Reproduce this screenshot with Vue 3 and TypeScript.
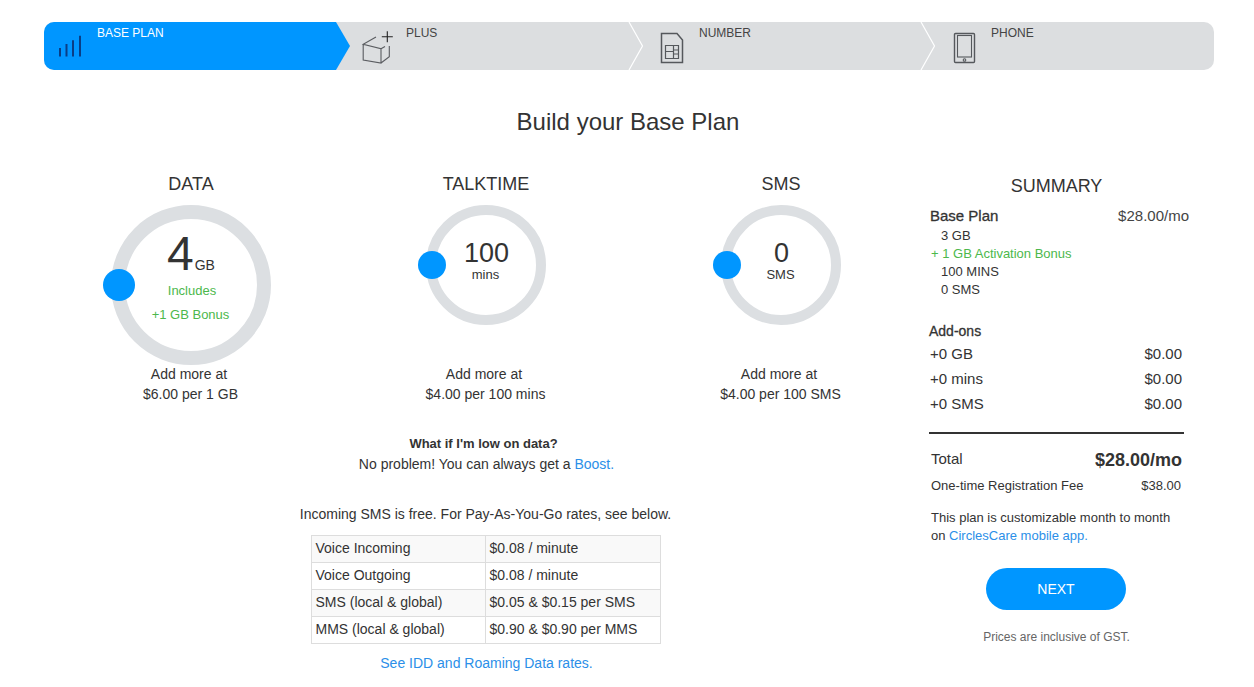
<template>
  <div class="page">
    <div class="stepper">
      <div v-for="(step, i) in steps" :key="step.label" class="step" :class="{ active: i === 0 }">
        <svg v-if="step.icon === 'bars'" class="icon" width="30" height="36" viewBox="0 0 30 36" fill="none" stroke="#0a3d85" stroke-width="2">
          <path d="M4 25.500V17M10.500 25.500V13M17 25.500V9.300M24 25.500V4.700" />
        </svg>
        <svg v-else-if="step.icon === 'box'" class="icon" width="30" height="36" viewBox="0 0 30 36" fill="none" stroke="#5a5c60" stroke-width="1.100">
          <path d="M1.200 13.300V29L19 32V17.700L1.200 13.300L14 6M19 17.700L23 15.500M19 32L27.300 25.700V15" />
          <path d="M25.300 .2v11M19.800 5.700h11" stroke="#222" />
        </svg>
        <svg v-else-if="step.icon === 'sim'" class="icon" width="30" height="36" viewBox="0 0 30 36" fill="none" stroke="#55585c" stroke-width="1.500">
          <path d="M6.500 2.500H22L27.500 9V31.500H6.500Z" />
          <path d="M10.500 14.500H23.500V27.500H10.500ZM18.500 14.500V27.500M10.500 20.500H18.500V27.500M18.500 19H23.500M18.500 23H23.500" stroke-width="1.200" />
        </svg>
        <svg v-else class="icon" width="30" height="36" viewBox="0 0 30 36" fill="none" stroke="#55585c" stroke-width="1.400">
          <rect x="7.500" y="2.500" width="20" height="29" rx="1" />
          <rect x="10.500" y="4.500" width="14" height="21.500" stroke-width="1.100" />
          <circle cx="17.500" cy="29" r="1.300" stroke-width="1.100" />
        </svg>
        <span class="step-label">{{ step.label }}</span>
        <svg v-if="i > 0 && i < 3" class="chevron" width="16" height="48" viewBox="0 0 16 48" fill="none" stroke="#fff" stroke-width="1.200">
          <path d="M1 0l13.500 24L1 48" />
        </svg>
      </div>
    </div>

    <h1 class="title">Build your Base Plan</h1>

    <div class="columns">
      <div class="left">
        <div class="dials">
          <div v-for="dial in dials" :key="dial.name" class="dial">
            <div class="dial-name">{{ dial.name }}</div>
            <div class="dial-box">
              <div class="ring" :class="{ big: dial.big }">
                <span class="knob"></span>
                <div v-if="dial.big" class="big-value">4<small>GB</small></div>
                <div v-else class="value">{{ dial.value }}</div>
                <div v-if="!dial.big" class="unit">{{ dial.unit }}</div>
                <div v-if="dial.big" class="bonus includes">Includes</div>
                <div v-if="dial.big" class="bonus">+1 GB Bonus</div>
              </div>
            </div>
            <p class="price"><span class="add-more">Add more at</span><br />{{ dial.price }}</p>
          </div>
        </div>

        <p class="low"><b>What if I'm low on data?</b>No problem! You can always get a <a>Boost.</a></p>
        <p class="incoming">Incoming SMS is free. For Pay-As-You-Go rates, see below.</p>
        <table class="rates">
          <tbody>
            <tr v-for="rate in rates" :key="rate[0]">
              <td class="name">{{ rate[0] }}</td>
              <td>{{ rate[1] }}</td>
            </tr>
          </tbody>
        </table>
        <a class="idd">See IDD and Roaming Data rates.</a>
      </div>

      <aside class="summary">
        <h2>SUMMARY</h2>
        <div class="plan-head">
          <strong>Base Plan</strong>
          <span>$28.00/mo</span>
        </div>
        <ul class="plan-items">
          <li>3 GB</li>
          <li class="green">+ 1 GB Activation Bonus</li>
          <li>100 MINS</li>
          <li>0 SMS</li>
        </ul>
        <div class="addons-title">Add-ons</div>
        <div v-for="addon in addons" :key="addon" class="addon">
          <span>{{ addon }}</span>
          <span>$0.00</span>
        </div>
        <div class="total">
          <span>Total</span>
          <strong>$28.00/mo</strong>
        </div>
        <div class="fee">
          <span>One-time Registration Fee</span>
          <small>$38.00</small>
        </div>
        <p class="note">This plan is customizable month to month<br />on <a>CirclesCare mobile app.</a></p>
        <button class="next" type="button">NEXT</button>
        <p class="gst">Prices are inclusive of GST.</p>
      </aside>
    </div>
  </div>
</template>

<script setup lang="ts">
const steps = [
  { label: 'BASE PLAN', icon: 'bars' },
  { label: 'PLUS', icon: 'box' },
  { label: 'NUMBER', icon: 'sim' },
  { label: 'PHONE', icon: 'phone' },
]

const dials = [
  { name: 'DATA', value: '4', unit: 'GB', price: '$6.00 per 1 GB', big: true },
  { name: 'TALKTIME', value: '100', unit: 'mins', price: '$4.00 per 100 mins', big: false },
  { name: 'SMS', value: '0', unit: 'SMS', price: '$4.00 per 100 SMS', big: false },
]

const rates = [
  ['Voice Incoming', '$0.08 / minute'],
  ['Voice Outgoing', '$0.08 / minute'],
  ['SMS (local & global)', '$0.05 & $0.15 per SMS'],
  ['MMS (local & global)', '$0.90 & $0.90 per MMS'],
]

const addons = ['+0 GB', '+0 mins', '+0 SMS']
</script>

<style>
html,
body {
  background: #fff;
  overflow: hidden;
}
</style>

<style scoped>
.page {
  width: 1254px;
  height: 687px;
  overflow: hidden;
  padding: 22px 40px 0 44px;
  box-sizing: border-box;
  font-family: 'Liberation Sans', Arial, sans-serif;
  font-size: 14px;
  line-height: 20px;
  color: #333;
}
a {
  color: #2b8fe8;
}
.stepper {
  display: flex;
  width: 1170px;
  height: 48px;
  border-radius: 10px;
  background: #dcdee0;
  position: relative;
}
.step {
  width: 293px;
  flex: none;
  box-sizing: border-box;
  position: relative;
  display: flex;
  padding-left: 26px;
  color: #444;
}
.step:first-child {
  width: 292px;
  padding-left: 12px;
  border-radius: 10px 0 0 10px;
}
.step:nth-child(3) {
  width: 292px;
}
.step.active {
  background: #0096ff;
  color: #fff;
}
.step.active::after {
  content: '';
  position: absolute;
  left: 100%;
  top: 0;
  width: 14px;
  height: 48px;
  background: #0096ff;
  clip-path: polygon(0 0, 100% 50%, 0 100%);
  z-index: 1;
}
.icon {
  margin-top: 9px;
  flex: none;
  overflow: visible;
}
.step-label {
  margin-left: 14px;
  font-size: 12px;
  line-height: 14px;
  padding-top: 4px;
}
.step:first-child .step-label {
  margin-left: 11px;
}
.chevron {
  position: absolute;
  right: -15px;
  top: 0;
}
.title {
  margin: 37px 0 0;
  width: 1168px;
  text-align: center;
  font-size: 24px;
  line-height: 30px;
  font-weight: 400;
}
.columns {
  display: flex;
  margin-top: 35px;
}
.left {
  width: 885px;
  display: flex;
  flex-direction: column;
  align-items: center;
}
.dials {
  display: flex;
  width: 100%;
}
.dial {
  width: 295px;
  display: flex;
  flex-direction: column;
  align-items: center;
}
.dial-name {
  font-size: 18px;
  line-height: 24px;
  margin-right: 1px;
}
.dial-box {
  height: 159px;
  margin-top: 9px;
  margin-right: 2px;
}
.ring {
  position: relative;
  box-sizing: border-box;
  width: 120px;
  height: 120px;
  border: 10px solid #dcdfe2;
  border-radius: 50%;
  display: flex;
  flex-direction: column;
  align-items: center;
}
.ring.big {
  width: 160px;
  height: 160px;
  border-width: 14px;
}
.knob {
  position: absolute;
  left: -18px;
  top: 36px;
  width: 28px;
  height: 28px;
  border-radius: 50%;
  background: #0096ff;
}
.big .knob {
  left: -22px;
  top: 50px;
  width: 32px;
  height: 32px;
}
.value {
  margin-top: 23px;
  font-size: 27px;
  line-height: 30px;
  margin-left: 2px;
}
.unit {
  font-size: 13px;
  line-height: 14px;
}
.big-value {
  margin-top: 9px;
  margin-left: 1px;
  font-size: 48px;
  line-height: 51px;
}
.big-value small {
  font-size: 14px;
  line-height: 14px;
  margin-left: 1px;
}
.bonus {
  color: #4cb84c;
  font-size: 13px;
  line-height: 24px;
}
.includes {
  margin-left: 3px;
}
.price {
  margin: 0 2px 0 0;
  text-align: center;
}
.add-more {
  padding-right: 3px;
}
.low {
  margin: 30px 0 0;
  text-align: center;
}
.low b {
  display: block;
  font-size: 13px;
  font-weight: 700;
  margin-right: 6px;
}
.incoming {
  margin: 30px 2px 0 0;
}
.rates {
  margin: 11px 2px 0 0;
  width: 350px;
  border-collapse: collapse;
}
.rates td {
  border: 1px solid #ddd;
  height: 27px;
  padding: 0 3px 2px 4px;
  line-height: 20px;
  box-sizing: border-box;
}
.rates td.name {
  width: 174px;
}
.rates tr:nth-child(odd) td {
  background: #f9f9f9;
}
.idd {
  margin-top: 9px;
}
.summary {
  width: 255px;
  flex: none;
}
.summary h2 {
  margin: 2px 0 0;
  text-align: center;
  font-size: 18px;
  line-height: 24px;
  font-weight: 400;
}
.plan-head {
  display: flex;
  justify-content: space-between;
  margin: 8px -5px 0 1px;
  font-size: 15px;
}
.plan-head strong {
  font-weight: 400;
  font-size: 15px;
  -webkit-text-stroke: 0.3px #333;
}
.plan-head span {
  color: #444;
}
.plan-items {
  list-style: none;
  margin: 1px 0 0;
  padding: 0 0 0 12px;
  font-size: 13px;
  line-height: 18px;
}
.plan-items .green {
  color: #4cb84c;
  margin-left: -10px;
}
.addons-title {
  margin-top: 22px;
  font-size: 14px;
  -webkit-text-stroke: 0.3px #333;
}
.addon {
  display: flex;
  justify-content: space-between;
  padding: 0 2px 0 1px;
  font-size: 15px;
  line-height: 25px;
}
.total {
  display: flex;
  justify-content: space-between;
  align-items: center;
  margin-top: 16px;
  padding: 14px 2px 0 2px;
  border-top: 2px solid #333;
  font-size: 15px;
  line-height: 24px;
}
.total span {
  margin-top: -2px;
}
.total strong {
  font-size: 18px;
}
.fee {
  display: flex;
  justify-content: space-between;
  align-items: center;
  padding: 0 3px 0 2px;
  margin-top: 4px;
  font-size: 13px;
}
.fee small {
  font-size: 13px;
}
.note {
  margin: 13px 0 0 2px;
  font-size: 13px;
  line-height: 18px;
}
.next {
  display: block;
  width: 140px;
  height: 42px;
  margin: 23px 0 0 57px;
  border: 0;
  border-radius: 21px;
  background: #0096ff;
  color: #fff;
  font: 14px 'Liberation Sans', Arial, sans-serif;
}
.gst {
  margin: 17px 0 0;
  text-align: center;
  font-size: 12px;
  color: #666;
}
</style>
